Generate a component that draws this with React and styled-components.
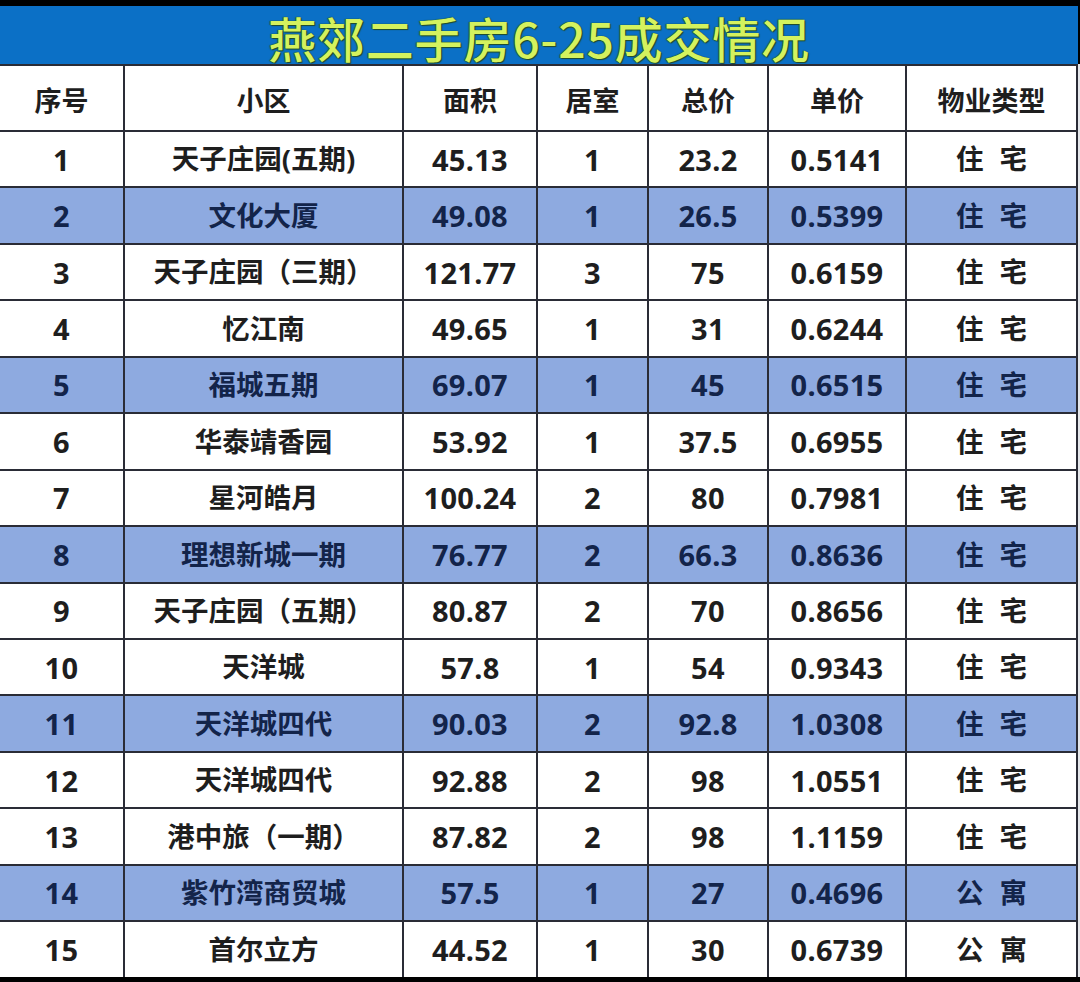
import React from "react";
import styled, { createGlobalStyle } from "styled-components";

const GlobalStyle = createGlobalStyle`
  html, body { margin: 0; padding: 0; background: #000; }
  body { font-family: "Noto Sans", "Noto Sans CJK SC", sans-serif; }
`;

const Page = styled.div`
  width: 1080px;
  height: 982px;
  background: #000;
  padding-top: 6px;
  box-sizing: border-box;
  display: flex;
  flex-direction: column;
  overflow: hidden;
`;

const TitleBar = styled.div`
  height: 58px;
  width: 1078px;
  background: #0b70c6;
  display: flex;
  align-items: center;
  justify-content: center;
  box-sizing: border-box;
`;

const Title = styled.h1`
  margin: 0;
  font-family: "Noto Sans CJK SC", sans-serif;
  font-size: 48px;
  font-weight: 500;
  color: #d4f25e;
  line-height: 1;
  letter-spacing: 0.8px;
  padding-top: 3px;
  text-shadow: 0 0 1px #1b4a1a, 1px 1px 1px #234b2a, -1px 0 1px #2c5a30;
`;

const TableWrap = styled.div`
  display: flex;
  width: 1080px;
`;

const Grid = styled.div`
  display: grid;
  grid-template-columns: 123px 277px 132px 109px 118px 136px 169px;
  grid-template-rows: 64px;
  grid-auto-rows: 54.45px;
  gap: 2px;
  background: #2a2c36;
  padding: 2px 2px 0 0;
  width: 1078px;
  box-sizing: border-box;
`;

const Edge = styled.div`
  width: 2px;
  background: #e4e6ea;
`;

const Cell = styled.div`
  display: flex;
  align-items: center;
  justify-content: center;
  background: ${(p) => (p.$blue ? "#8eaae0" : "#ffffff")};
  color: ${(p) => (p.$blue ? "#13244a" : "#1e1e1e")};
  font-family: "Noto Sans", "Noto Sans CJK SC", sans-serif;
  font-weight: 700;
  font-size: ${(p) => (p.$cjk ? "27.5px" : "29px")};
  line-height: 1;
  letter-spacing: ${(p) => (p.$cjk ? "0" : "0.3px")};
  white-space: nowrap;
  word-spacing: ${(p) => (p.$spaced ? "9px" : "normal")};
`;

const HeadCell = styled(Cell)`
  font-family: "Noto Sans CJK SC", sans-serif;
  font-size: 27px;
  padding-top: 2px;
`;

const headers = ["序号", "小区", "面积", "居室", "总价", "单价", "物业类型"];

const rows = [
  ["1", "天子庄园(五期)", "45.13", "1", "23.2", "0.5141", "住 宅"],
  ["2", "文化大厦", "49.08", "1", "26.5", "0.5399", "住 宅"],
  ["3", "天子庄园（三期）", "121.77", "3", "75", "0.6159", "住 宅"],
  ["4", "忆江南", "49.65", "1", "31", "0.6244", "住 宅"],
  ["5", "福城五期", "69.07", "1", "45", "0.6515", "住 宅"],
  ["6", "华泰靖香园", "53.92", "1", "37.5", "0.6955", "住 宅"],
  ["7", "星河皓月", "100.24", "2", "80", "0.7981", "住 宅"],
  ["8", "理想新城一期", "76.77", "2", "66.3", "0.8636", "住 宅"],
  ["9", "天子庄园（五期）", "80.87", "2", "70", "0.8656", "住 宅"],
  ["10", "天洋城", "57.8", "1", "54", "0.9343", "住 宅"],
  ["11", "天洋城四代", "90.03", "2", "92.8", "1.0308", "住 宅"],
  ["12", "天洋城四代", "92.88", "2", "98", "1.0551", "住 宅"],
  ["13", "港中旅（一期）", "87.82", "2", "98", "1.1159", "住 宅"],
  ["14", "紫竹湾商贸城", "57.5", "1", "27", "0.4696", "公 寓"],
  ["15", "首尔立方", "44.52", "1", "30", "0.6739", "公 寓"],
];

export default function App() {
  return (
    <>
      <GlobalStyle />
      <Page>
        <TitleBar>
          <Title>燕郊二手房6-25成交情况</Title>
        </TitleBar>
        <TableWrap>
          <Grid>
            {headers.map((h) => (
              <HeadCell key={h} $cjk>
                {h}
              </HeadCell>
            ))}
            {rows.map((r, i) => {
              const blue = i % 3 === 1;
              return r.map((v, j) => (
                <Cell
                  key={`${i}-${j}`}
                  $blue={blue}
                  $cjk={j === 1 || j === 6}
                  $spaced={j === 6}
                >
                  {v}
                </Cell>
              ));
            })}
          </Grid>
          <Edge />
        </TableWrap>
      </Page>
    </>
  );
}
